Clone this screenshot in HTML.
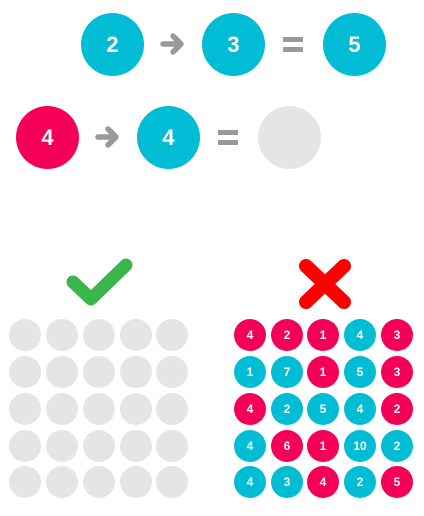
<!DOCTYPE html>
<html><head><style>
body{margin:0;width:424px;height:516px;background:#fff;position:relative;overflow:hidden;font-family:"Liberation Sans",Arial,sans-serif;font-weight:bold;color:#fff}
.c{position:absolute;border-radius:50%;display:flex;align-items:center;justify-content:center}
.b{width:63px;height:63px;font-size:22px}
.s{width:32px;height:32px;font-size:12px}
.cy{background:#00bcd4}.rd{background:#f50057}.gy{background:#e5e5e5}
svg{position:absolute;left:0;top:0}
</style></head><body>
<div class="c b cy" style="left:81px;top:13px">2</div>
<div class="c b cy" style="left:202px;top:13px">3</div>
<div class="c b cy" style="left:323px;top:13px">5</div>
<div class="c b rd" style="left:16px;top:106px">4</div>
<div class="c b cy" style="left:137px;top:106px">4</div>
<div class="c b gy" style="left:258px;top:106px"></div>
<svg width="424" height="516">
<g stroke="#999" stroke-width="5.5" fill="none" stroke-linecap="round" stroke-linejoin="round">
<path d="M163 44H180M173 36L181 44L173 52"/>
<path d="M98 137H115M108 129L116 137L108 145"/>
</g>
<g fill="#999">
<rect x="283" y="37" width="20" height="5"/><rect x="283" y="47" width="20" height="5"/>
<rect x="218" y="130" width="20" height="5"/><rect x="218" y="140" width="20" height="5"/>
</g>
<path d="M73 282L91 299L126 265" stroke="#3ab54a" stroke-width="13" fill="none" stroke-linecap="round" stroke-linejoin="round"/>
<path d="M306 266L344 302M344 266L306 302" stroke="#ff0000" stroke-width="14" fill="none" stroke-linecap="round"/>
</svg>
<div id="g"></div>
<script>
var xs=[9,46,83,120,156],xr=[234,271,307,344,381],ys=[319,356,393,430,466];
var d=[["4r","2r","1r","4c","3r"],["1c","7c","1r","5c","3r"],["4r","2c","5c","4c","2r"],["4c","6r","1r","10c","2c"],["4c","3c","4r","2c","5r"]];
var h="";
for(var r=0;r<5;r++)for(var c=0;c<5;c++){
h+='<div class="c s gy" style="left:'+xs[c]+'px;top:'+ys[r]+'px"></div>';
var v=d[r][c];
h+='<div class="c s '+(v.slice(-1)=="r"?"rd":"cy")+'" style="left:'+xr[c]+'px;top:'+ys[r]+'px">'+v.slice(0,-1)+'</div>';
}
document.getElementById("g").innerHTML=h;
</script>
</body></html>
